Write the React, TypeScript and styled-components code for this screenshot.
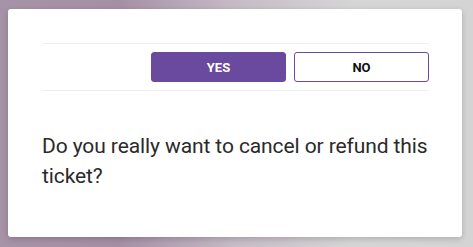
import React from 'react';
import styled, { createGlobalStyle } from 'styled-components';

const GlobalStyle = createGlobalStyle`
  html, body {
    margin: 0;
    padding: 0;
  }
  body {
    font-family: Roboto, "Liberation Sans", sans-serif;
  }
`;

const Backdrop = styled.div`
  width: 473px;
  height: 247px;
  box-sizing: border-box;
  padding: 9px 11px 10px 8px;
  background: linear-gradient(90deg, #a793a7 0%, #a58fa5 25%, #c6bcc6 50%, #d6d6d6 75%, #d4d4d4 100%);
  display: flex;
`;

const Card = styled.div`
  flex: 1;
  background: #ffffff;
  border-radius: 3px;
  box-shadow: 0 2px 6px rgba(0, 0, 0, 0.18);
  padding: 34px 33px 0 34px;
  display: flex;
  flex-direction: column;
`;

const Divider = styled.div`
  height: 1px;
  background: #edf0f5;
`;

const ButtonRow = styled.div`
  display: flex;
  justify-content: flex-end;
  gap: 8px;
  padding: 8px 0;
`;

interface ButtonProps {
  primary?: boolean;
}

const Button = styled.button<ButtonProps>`
  width: 135px;
  height: 30px;
  box-sizing: border-box;
  border-radius: 3px;
  border: 1.5px solid #6a4a9e;
  background: ${p => (p.primary ? '#6a4a9e' : '#ffffff')};
  color: ${p => (p.primary ? '#ffffff' : '#111111')};
  font-family: Roboto, "Liberation Sans", sans-serif;
  font-weight: 700;
  font-size: 13px;
  cursor: pointer;
`;

const Message = styled.p`
  margin: 40px -10px 0 0;
  font-family: Roboto, "Liberation Sans", sans-serif;
  font-weight: 400;
  font-size: 21px;
  letter-spacing: -0.1px;
  line-height: 30px;
  color: #2a2a2a;
`;

export default function App() {
  return (
    <>
      <GlobalStyle />
      <Backdrop>
        <Card>
          <Divider />
          <ButtonRow>
            <Button primary>YES</Button>
            <Button>NO</Button>
          </ButtonRow>
          <Divider />
          <Message>Do you really want to cancel or refund this ticket?</Message>
        </Card>
      </Backdrop>
    </>
  );
}
